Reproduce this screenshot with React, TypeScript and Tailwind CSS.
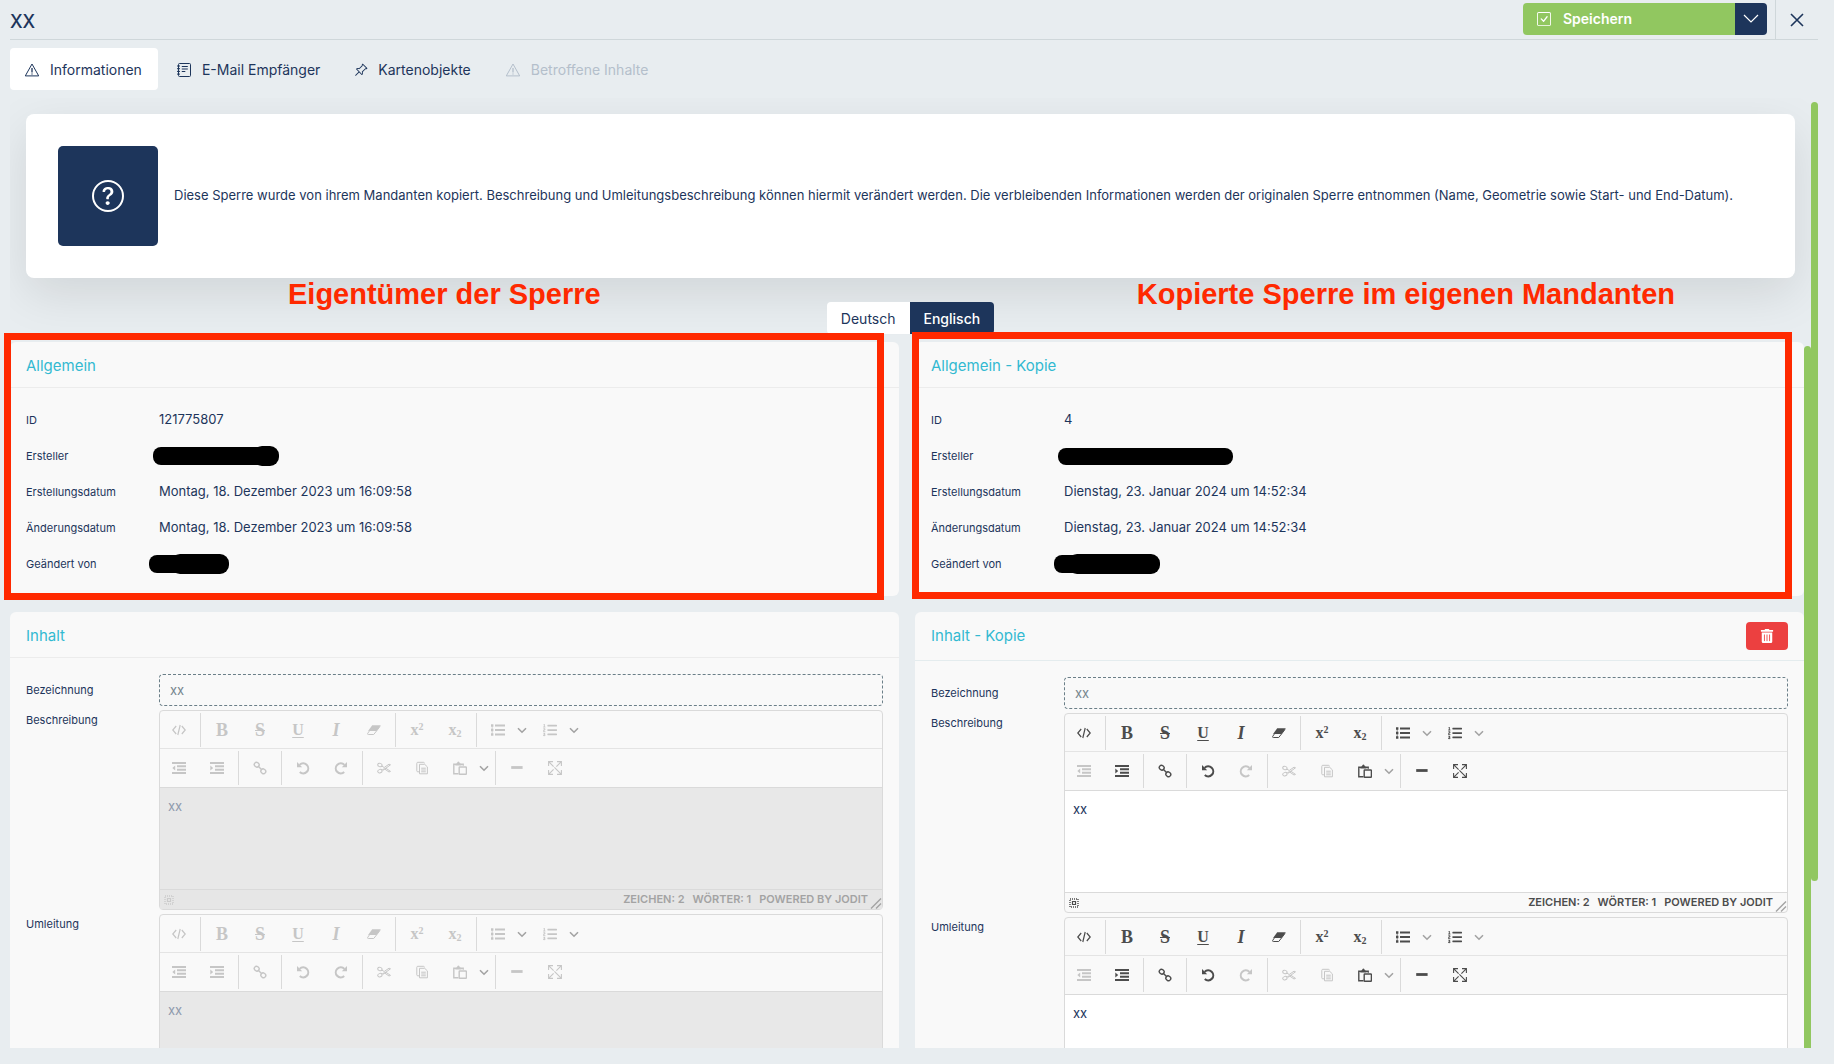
import { useState } from "react";
import type { ReactNode } from "react";
import { clsx } from "clsx";
import { FaListOl, FaTrashAlt } from "react-icons/fa";
import { BsCheckSquare, BsPinAngle, BsQuestionCircle } from "react-icons/bs";

type Detail = {
  label: string;
  value?: string;
  redaction?: ReactNode;
};

type PanelProps = {
  title: string;
  action?: ReactNode;
  highlight?: string;
  children: ReactNode;
};

type IconProps = { children: ReactNode };

function Icon({ children }: IconProps) {
  return (
    <svg viewBox="0 0 14 14" className="size-3.5" fill="none" stroke="currentColor" aria-hidden="true">
      {children}
    </svg>
  );
}

function WarningIcon() {
  return (
    <svg viewBox="0 0 16 16" className="size-4" fill="none" stroke="currentColor" aria-hidden="true">
      <path d="M8 2 14.7 13.9H1.3Z" strokeLinejoin="round" />
      <path d="M8 6v4.5M8 11.4v1.2" strokeWidth="1.3" />
    </svg>
  );
}

function NotebookIcon() {
  return (
    <svg viewBox="0 0 16 16" className="size-4" fill="none" stroke="currentColor" aria-hidden="true">
      <rect x="2.5" y="1.5" width="12" height="13" rx="1" />
      <path d="M5.8 4.5h6M5.8 7h6M5.8 9.5h3.5" strokeWidth="1.2" />
      <path d="M1 4h3M1 6.7h3M1 9.4h3M1 12.1h3" />
    </svg>
  );
}

const icons = {
  source: <Icon><path d="M4.2 3 .8 7l3.4 4M9.8 3l3.4 4-3.4 4M8.2 2 5.8 12" strokeWidth="1.2" /></Icon>,
  bold: <span className="font-['Liberation_Serif',serif] text-lg leading-none font-bold">B</span>,
  strike: <span className="font-['Liberation_Serif',serif] text-lg leading-none font-bold line-through">S</span>,
  underline: <span className="font-['Liberation_Serif',serif] text-base leading-none font-bold underline underline-offset-2">U</span>,
  italic: <span className="font-['Liberation_Serif',serif] text-lg leading-none font-bold italic">I</span>,
  eraser: (
    <Icon>
      <path d="M5.2 2.2h8.6L9.5 8H1.1z" fill="currentColor" stroke="none" />
      <path d="M3.4 6.5.7 10.4q-.4 1.1.6 1.1h5.4l3-3.7L13 3.4" />
    </Icon>
  ),
  sup: <span className="font-['Liberation_Serif',serif] text-base leading-none font-bold">x<sup className="text-[10px]">2</sup></span>,
  sub: <span className="font-['Liberation_Serif',serif] text-base leading-none font-bold">x<sub className="text-[10px]">2</sub></span>,
  ul: (
    <Icon>
      <path d="M4 2.5h10M4 7h10M4 11.5h10" strokeWidth="2" />
      <path d="M0 2.5h2.4M0 7h2.4M0 11.5h2.4" strokeWidth="2.4" />
      <path d="M1.2 2v10" strokeWidth=".6" />
    </Icon>
  ),
  ol: <FaListOl className="size-3.5" aria-hidden="true" />,
  outdent: (
    <Icon>
      <path d="M0 2h14M5 5.3h9M5 8.7h9M0 12h14" strokeWidth="1.9" />
      <path d="M3.2 4.4v5.2L.3 7z" fill="currentColor" stroke="none" />
    </Icon>
  ),
  indent: (
    <Icon>
      <path d="M0 2h14M5 5.3h9M5 8.7h9M0 12h14" strokeWidth="1.9" />
      <path d="M.3 4.4v5.2L3.2 7z" fill="currentColor" stroke="none" />
    </Icon>
  ),
  link: (
    <Icon>
      <g strokeWidth="1.4">
        <rect x="1.2" y="1.5" width="5" height="4.4" rx="2.2" transform="rotate(40 3.7 3.7)" />
        <rect x="7.8" y="8.1" width="5" height="4.4" rx="2.2" transform="rotate(40 10.3 10.3)" />
        <path d="m5 5 4 4" />
      </g>
    </Icon>
  ),
  undo: (
    <Icon>
      <path d="M3.6 3.9A5 5 0 1 1 3.8 11" strokeWidth="2.1" />
      <path d="M1 1v5.2h5.2z" fill="currentColor" stroke="none" />
    </Icon>
  ),
  redo: (
    <Icon>
      <path d="M10.4 3.9A5 5 0 1 0 10.2 11" strokeWidth="2.1" />
      <path d="M13 1v5.2H7.8z" fill="currentColor" stroke="none" />
    </Icon>
  ),
  cut: (
    <Icon>
      <ellipse cx="2.9" cy="4" rx="2.2" ry="1.7" transform="rotate(20 2.9 4)" />
      <ellipse cx="2.9" cy="10.2" rx="2.2" ry="1.7" transform="rotate(-20 2.9 10.2)" />
      <path d="m4.8 5 2.4 1.5L12 3.2l1.5.6L6 9.3M4.8 9.3l2.4-1.6L12 11l1.5-.6-4.8-3.3" />
    </Icon>
  ),
  copy: (
    <Icon>
      <path d="M4.4 10.8H2.8q-1 0-1-1V2.3q0-1 1-1h5.6q1 0 1 1" />
      <path d="M4.5 3.3h5.2l2.7 2.6v6.9H4.5z" />
      <path d="M6.2 7.2h4.6M6.2 9h4.6M6.2 10.8h4.6" />
    </Icon>
  ),
  paste: (
    <Icon>
      <path d="M5.5 12.7H.8V3.3h9.4v1.5" strokeWidth="1.4" />
      <path d="M2.2 4.4Q2.6 2.4 4 2.2 4.3.4 5.4.4T6.8 2.2Q8.3 2.4 8.7 4.4z" fill="currentColor" stroke="none" />
      <rect x="6.2" y="6" width="7.2" height="7.2" rx=".5" strokeWidth="1.4" />
    </Icon>
  ),
  hr: <Icon><path d="M1.2 6.5h11.4" strokeWidth="2.8" /></Icon>,
  full: <Icon><path d="M5 .6H.6V5M9 .6h4.4V5M5 13.4H.6V9M9 13.4h4.4V9M.6.6l5 5M13.4.6l-5 5M.6 13.4l5-5M13.4 13.4l-7-7" strokeWidth="1.1" /></Icon>,
};

type Tool = {
  icon: keyof typeof icons;
  title: string;
  menu?: boolean;
  off?: boolean;
};

const toolbar: Tool[][][] = [
  [
    [{ icon: "source", title: "Quellcode" }],
    [
      { icon: "bold", title: "Fett" },
      { icon: "strike", title: "Durchgestrichen" },
      { icon: "underline", title: "Unterstrichen" },
      { icon: "italic", title: "Kursiv" },
      { icon: "eraser", title: "Formatierung entfernen" },
    ],
    [
      { icon: "sup", title: "Hochgestellt" },
      { icon: "sub", title: "Tiefgestellt" },
    ],
    [
      { icon: "ul", title: "Liste", menu: true },
      { icon: "ol", title: "Nummerierte Liste", menu: true },
    ],
  ],
  [
    [
      { icon: "outdent", title: "Einzug verkleinern", off: true },
      { icon: "indent", title: "Einzug vergrößern" },
    ],
    [{ icon: "link", title: "Link" }],
    [
      { icon: "undo", title: "Rückgängig" },
      { icon: "redo", title: "Wiederholen", off: true },
    ],
    [
      { icon: "cut", title: "Ausschneiden", off: true },
      { icon: "copy", title: "Kopieren", off: true },
      { icon: "paste", title: "Einfügen", menu: true },
    ],
    [
      { icon: "hr", title: "Trennlinie" },
      { icon: "full", title: "Vollbild" },
    ],
  ],
];

function ToolButton({ tool, disabled }: { tool: Tool; disabled?: boolean }) {
  const off = disabled || tool.off;
  return (
    <div className="mx-0.5 flex items-center">
      <button
        type="button"
        title={tool.title}
        aria-label={tool.title}
        disabled={off}
        className={clsx(
          "flex h-[34px] w-[34px] items-center justify-center leading-none",
          off ? "text-[#c6c6c6]" : "text-[#4c4c4c]"
        )}
      >
        {icons[tool.icon]}
      </button>
      {tool.menu && (
        <button
          type="button"
          aria-label={`${tool.title} Optionen`}
          disabled={disabled}
          className="flex h-[34px] w-3.5 items-center justify-center text-[#a3a3a3]"
        >
          <svg viewBox="0 0 10 10" className="size-2.5" fill="none" stroke="currentColor" strokeWidth="1.6" aria-hidden="true">
            <path d="m1 3.2 4 4 4-4" />
          </svg>
        </button>
      )}
    </div>
  );
}

function Editor({ id, disabled }: { id: string; disabled?: boolean }) {
  const [text, setText] = useState("xx");

  return (
    <div className="relative rounded-sm border border-[#dadada]">
      {toolbar.map((row, i) => (
        <div
          key={i}
          className={clsx("flex items-center border-b", i === 0 ? "h-[38px] border-[#e4e4e4]" : "h-[39px] border-[#dadada]")}
        >
          {row.map((group, g) => (
            <div key={g} className="flex items-center">
              {g > 0 && <span className="mx-0.5 h-[34px] w-px bg-[#dadada]" />}
              {group.map((tool) => (
                <ToolButton key={tool.icon} tool={tool} disabled={disabled} />
              ))}
            </div>
          ))}
        </div>
      ))}
      <textarea
        id={id}
        value={text}
        onChange={(e) => setText(e.target.value)}
        disabled={disabled}
        className={clsx(
          "block h-[101px] w-full resize-none p-2 text-[13px] leading-5 outline-none",
          disabled ? "bg-[#e8e8e8] text-[#8f9aad]" : "bg-white text-[#1d355b]"
        )}
      />
      <div
        className={clsx(
          "flex h-5 items-center justify-between border-t border-[#dadada] pr-3.5 pl-1 text-[11px] font-semibold uppercase",
          disabled ? "bg-[#e6e6e6] text-[#a3a3a3]" : "text-[#4c4c4c]"
        )}
      >
        <svg viewBox="0 0 10 10" className={clsx("size-2.5", disabled && "opacity-40")} fill="none" stroke="currentColor" aria-hidden="true">
          <path d="M1 1h8v8H1z" strokeDasharray="1 1" strokeWidth="1.4" />
          <path d="M3.5 3.5h3v3h-3z" strokeWidth="1.2" />
        </svg>
        <div className="flex gap-2">
          <span>Zeichen: 2</span>
          <span>Wörter: 1</span>
          <a href="#jodit">Powered by Jodit</a>
        </div>
      </div>
      <svg viewBox="0 0 12 12" className="absolute right-0 bottom-0 size-3 text-[#a3a3a3]" fill="none" stroke="currentColor" strokeWidth="1.4" aria-hidden="true">
        <path d="M1 11.5 11 1.5M6 11.5l5-5" />
      </svg>
    </div>
  );
}

// blacked-out personal data
function Redaction({ width, tail }: { width: number; tail: [number, number] }) {
  return (
    <svg viewBox={`0 0 ${width} 22`} width={width} height={22} role="img" aria-label="geschwärzt">
      <rect x="0" y="2" width={tail[1] - 8} height="18" rx="8" />
      <rect x={tail[0]} y="1" width={tail[1] - tail[0]} height="20" rx="9" />
    </svg>
  );
}

function Panel({ title, action, highlight, children }: PanelProps) {
  return (
    <section className="relative rounded-md bg-[#f9f9f9]">
      <header
        className={clsx(
          "flex items-center justify-between border-b px-4",
          action ? "h-[49px] border-[#e4ecee]" : "h-[46px] border-[#ececec] pt-1"
        )}
      >
        <h2 className="text-[15px] text-[#33b9d1]">{title}</h2>
        {action}
      </header>
      {children}
      {highlight && <div className={clsx("pointer-events-none absolute border-[7px] border-[#ff2900]", highlight)} />}
    </section>
  );
}

function DetailList({ details }: { details: Detail[] }) {
  return (
    <dl className="px-4 py-3.5">
      {details.map((d) => (
        <div key={d.label} className="flex h-9 items-center">
          <dt className="w-[133px] shrink-0 text-[11px]">{d.label}</dt>
          <dd className="text-[13px]">{d.value ?? d.redaction}</dd>
        </div>
      ))}
    </dl>
  );
}

function ContentForm({ prefix, disabled }: { prefix: string; disabled?: boolean }) {
  return (
    <form className="flex flex-col gap-1 p-4">
      <div className="flex items-center">
        <label htmlFor={`${prefix}-name`} className="w-[133px] shrink-0 text-[11px]">
          Bezeichnung
        </label>
        <input
          id={`${prefix}-name`}
          defaultValue="xx"
          readOnly
          className="h-8 min-w-0 flex-1 rounded-sm border border-dashed border-[#6b7f88] px-2.5 text-[13px] text-[#76868e] outline-none"
        />
      </div>
      {["Beschreibung", "Umleitung"].map((label) => (
        <div key={label} className="flex items-start">
          <label htmlFor={`${prefix}-${label}`} className="w-[133px] shrink-0 text-[11px] leading-5">
            {label}
          </label>
          <div className="min-w-0 flex-1">
            <Editor id={`${prefix}-${label}`} disabled={disabled} />
          </div>
        </div>
      ))}
    </form>
  );
}

const original: Detail[] = [
  { label: "ID", value: "121775807" },
  { label: "Ersteller", redaction: <span className="-ml-1.5 block"><Redaction width={126} tail={[100, 126]} /></span> },
  { label: "Erstellungsdatum", value: "Montag, 18. Dezember 2023 um 16:09:58" },
  { label: "Änderungsdatum", value: "Montag, 18. Dezember 2023 um 16:09:58" },
  { label: "Geändert von", redaction: <span className="-ml-2.5 block"><Redaction width={80} tail={[22, 80]} /></span> },
];

const copy: Detail[] = [
  { label: "ID", value: "4" },
  { label: "Ersteller", redaction: <span className="-ml-1.5 block h-[17px] w-[175px] rounded-lg bg-black" /> },
  { label: "Erstellungsdatum", value: "Dienstag, 23. Januar 2024 um 14:52:34" },
  { label: "Änderungsdatum", value: "Dienstag, 23. Januar 2024 um 14:52:34" },
  { label: "Geändert von", redaction: <span className="-ml-2.5 block"><Redaction width={106} tail={[14, 106]} /></span> },
];

const tabs = [
  { id: "info", label: "Informationen", icon: <WarningIcon /> },
  { id: "mail", label: "E-Mail Empfänger", icon: <NotebookIcon /> },
  { id: "map", label: "Kartenobjekte", icon: <BsPinAngle className="size-3.5" aria-hidden="true" /> },
  { id: "affected", label: "Betroffene Inhalte", icon: <WarningIcon />, disabled: true },
];

export default function App() {
  const [tab, setTab] = useState("info");
  const [language, setLanguage] = useState("Englisch");

  return (
    <div className="flex h-screen flex-col overflow-hidden bg-[#e8edf0] pb-4 font-[Inter,sans-serif] text-[#1d355b]">
      <header className="mr-4 ml-2.5 flex h-10 shrink-0 items-stretch justify-between border-b border-[#cfd7da]">
        <h1 className="pt-2 text-lg leading-7 font-medium">XX</h1>
        <div className="flex">
          <div className="mt-[3px] mr-2 flex h-8 overflow-hidden rounded-[4px] text-white">
            <button type="button" className="flex w-[212px] items-center gap-3 bg-[#91c760] px-3.5 text-sm font-semibold">
              <BsCheckSquare className="size-3.5" aria-hidden="true" />
              Speichern
            </button>
            <button type="button" aria-label="Weitere Optionen" className="flex w-8 items-center justify-center bg-[#1d355b]">
              <svg viewBox="0 0 16 16" className="size-4" fill="none" stroke="currentColor" strokeWidth="1.2" aria-hidden="true">
                <path d="m1 4 7 7 7-7" />
              </svg>
            </button>
          </div>
          <button type="button" aria-label="Schließen" className="flex w-[43px] items-center justify-center border-l border-[#cfd7da]">
            <svg viewBox="0 0 14 14" className="size-3.5" fill="none" stroke="currentColor" strokeWidth="1.6" aria-hidden="true">
              <path d="m1 1 12 12M13 1 1 13" />
            </svg>
          </button>
        </div>
      </header>

      <nav className="mt-2 ml-2.5 flex h-[42px] shrink-0 gap-1">
        {tabs.map((t) => (
          <button
            key={t.id}
            type="button"
            disabled={t.disabled}
            onClick={() => setTab(t.id)}
            className={clsx(
              "flex items-center gap-2.5 rounded-[4px] pt-0.5 pr-4 pl-3.5 text-sm",
              tab === t.id && "bg-white",
              t.disabled && "text-[#b4bfcb]"
            )}
          >
            {t.icon}
            {t.label}
          </button>
        ))}
      </nav>

      <main className="mt-2 mr-4 flex min-h-0 flex-1 overflow-hidden pl-2.5">
        <div className="flex min-w-0 flex-1 flex-col">
          <div className="shrink-0 overflow-hidden p-4 pb-2">
            <div className="flex items-center gap-4 rounded-lg bg-white p-8 shadow-[0_16px_48px_rgba(0,0,0,0.1)]">
              <div className="flex size-[100px] shrink-0 items-center justify-center rounded-[5px] bg-[#1d355b] text-white">
                <BsQuestionCircle className="size-8" aria-hidden="true" />
              </div>
              <p className="text-[13px]">
                Diese Sperre wurde von ihrem Mandanten kopiert. Beschreibung und Umleitungsbeschreibung können hiermit verändert
                werden. Die verbleibenden Informationen werden der originalen Sperre entnommen (Name, Geometrie sowie Start- und
                End-Datum).
              </p>
            </div>
            <div className="relative mt-6 flex justify-center">
              <p className="absolute -top-6 left-[262px] font-['Liberation_Sans',sans-serif] text-[29px] leading-8 font-bold text-[#ff2900]">
                Eigentümer der Sperre
              </p>
              <p className="absolute -top-6 right-[120px] font-['Liberation_Sans',sans-serif] text-[29px] leading-8 font-bold text-[#ff2900]">
                Kopierte Sperre im eigenen Mandanten
              </p>
              <div className="flex h-8 overflow-hidden rounded-[4px]">
                {["Deutsch", "Englisch"].map((lang) => (
                  <button
                    key={lang}
                    type="button"
                    onClick={() => setLanguage(lang)}
                    className={clsx("px-3.5 pt-0.5 text-sm", language === lang ? "bg-[#1d355b] font-medium text-white" : "bg-white")}
                  >
                    {lang}
                  </button>
                ))}
              </div>
            </div>
          </div>

          <div className="flex min-h-0 flex-1">
            <div className="grid flex-1 auto-rows-max grid-cols-2 gap-4">
              <div className="flex flex-col gap-4">
                <Panel title="Allgemein" highlight="-top-[9px] right-[15px] -bottom-1 -left-1.5">
                  <DetailList details={original} />
                </Panel>
                <Panel title="Inhalt">
                  <ContentForm prefix="original" disabled />
                </Panel>
              </div>
              <div className="flex flex-col gap-4">
                <Panel title="Allgemein - Kopie" highlight="-top-2.5 right-3 -bottom-[3px] -left-[3px]">
                  <DetailList details={copy} />
                </Panel>
                <Panel
                  title="Inhalt - Kopie"
                  action={
                    <button type="button" aria-label="Löschen" className="flex h-7 w-[42px] items-center justify-center rounded-[4px] bg-[#ec4040] text-white">
                      <FaTrashAlt className="size-3.5" aria-hidden="true" />
                    </button>
                  }
                >
                  <ContentForm prefix="copy" />
                </Panel>
              </div>
            </div>
            <div className="mt-1 w-[7px] shrink-0 rounded-t bg-[#91c760]" />
          </div>
        </div>
        <div className="mt-1 h-[82%] w-[7px] shrink-0 rounded bg-[#91c760]" />
      </main>
    </div>
  );
}
